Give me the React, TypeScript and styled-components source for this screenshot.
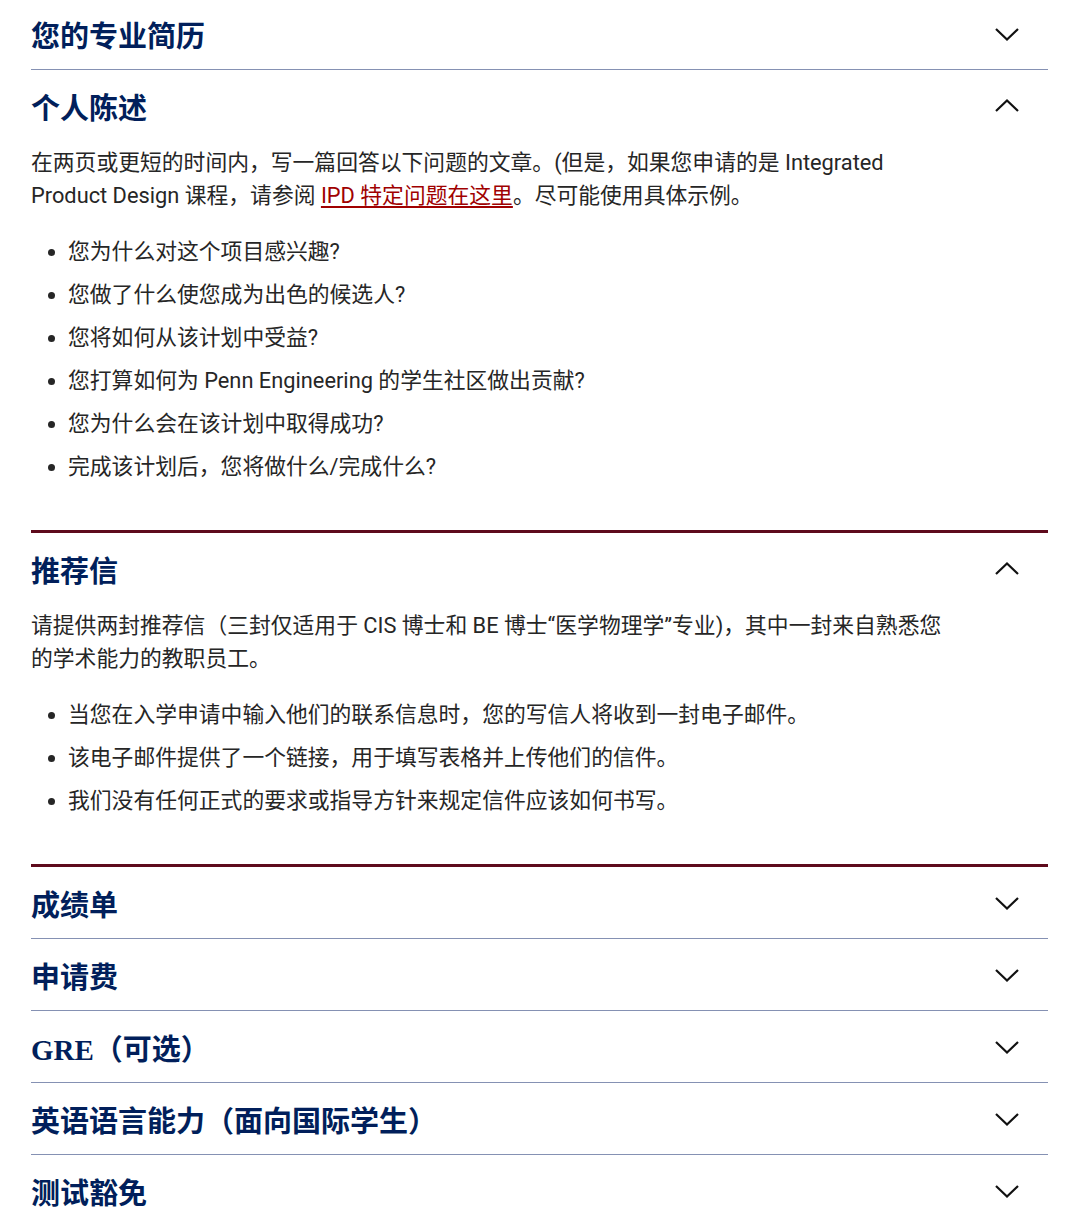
import styled, { createGlobalStyle } from "styled-components";

const GlobalStyle = createGlobalStyle`
  body {
    margin: 0;
    background: #fff;
    font-family: Roboto, "Noto Sans CJK SC", sans-serif;
    color: #262626;
  }
`;

const Page = styled.div`
  padding: 0 32px 0 31px;
  margin-top: -2px;
`;

const Item = styled.section<{ $open: boolean; $last: boolean }>`
  border-bottom: ${(p) =>
    p.$last ? "none" : p.$open ? "3px solid #5e0a1c" : "1px solid #8591b3"};
`;

const Header = styled.div`
  height: 71px;
  display: flex;
  align-items: center;
  justify-content: space-between;
`;

const Title = styled.h3`
  margin: 0;
  font-family: "Liberation Serif", "Noto Sans CJK SC", serif;
  font-weight: 700;
  font-size: 29px;
  color: #011f5b;
  letter-spacing: 0;
`;

const IconWrap = styled.span`
  display: flex;
  margin-right: 28px;
`;

const Panel = styled.div`
  padding: 5px 0 47px;
`;

const Para = styled.p`
  margin: 0;
  font-size: 21.8px;
  line-height: 33px;
  max-width: 960px;
`;

const Link = styled.a`
  color: #a00000;
  text-decoration: underline;
  text-underline-offset: 3px;
`;

const List = styled.ul`
  margin: 23px 0 0;
  padding-left: 37px;
  display: flex;
  flex-direction: column;
  gap: 10px;
`;

const Bullet = styled.li`
  font-size: 21.8px;
  line-height: 33px;
`;

interface Section {
  title: string;
  open?: boolean;
  body?: React.ReactNode;
  items?: string[];
}

const sections: Section[] = [
  { title: "您的专业简历" },
  {
    title: "个人陈述",
    open: true,
    body: (
      <>
        在两页或更短的时间内，写一篇回答以下问题的文章。(但是，如果您申请的是 Integrated
        <br />
        Product Design 课程，请参阅 <Link href="#">IPD 特定问题在这里</Link>。尽可能使用具体示例。
      </>
    ),
    items: [
      "您为什么对这个项目感兴趣?",
      "您做了什么使您成为出色的候选人?",
      "您将如何从该计划中受益?",
      "您打算如何为 Penn Engineering 的学生社区做出贡献?",
      "您为什么会在该计划中取得成功?",
      "完成该计划后，您将做什么/完成什么?",
    ],
  },
  {
    title: "推荐信",
    open: true,
    body: (
      <>
        请提供两封推荐信（三封仅适用于 CIS 博士和 BE 博士“医学物理学”专业)，其中一封来自熟悉您
        <br />
        的学术能力的教职员工。
      </>
    ),
    items: [
      "当您在入学申请中输入他们的联系信息时，您的写信人将收到一封电子邮件。",
      "该电子邮件提供了一个链接，用于填写表格并上传他们的信件。",
      "我们没有任何正式的要求或指导方针来规定信件应该如何书写。",
    ],
  },
  { title: "成绩单" },
  { title: "申请费" },
  { title: "GRE（可选）" },
  { title: "英语语言能力（面向国际学生）" },
  { title: "测试豁免" },
];

function Chevron({ up }: { up?: boolean }) {
  return (
    <svg width="26" height="16" viewBox="0 0 26 16" fill="none">
      <path
        d={up ? "M2 13 L13 2.5 L24 13" : "M2 3 L13 13.5 L24 3"}
        stroke="#111"
        strokeWidth="2.2"
      />
    </svg>
  );
}

export default function App() {
  return (
    <>
      <GlobalStyle />
      <Page>
        {sections.map((s, i) => (
          <Item key={i} $open={!!s.open} $last={i === sections.length - 1}>
            <Header>
              <Title>{s.title}</Title>
              <IconWrap>
                <Chevron up={s.open} />
              </IconWrap>
            </Header>
            {s.open && (
              <Panel>
                <Para>{s.body}</Para>
                <List>
                  {s.items?.map((t, j) => (
                    <Bullet key={j}>{t}</Bullet>
                  ))}
                </List>
              </Panel>
            )}
          </Item>
        ))}
      </Page>
    </>
  );
}
